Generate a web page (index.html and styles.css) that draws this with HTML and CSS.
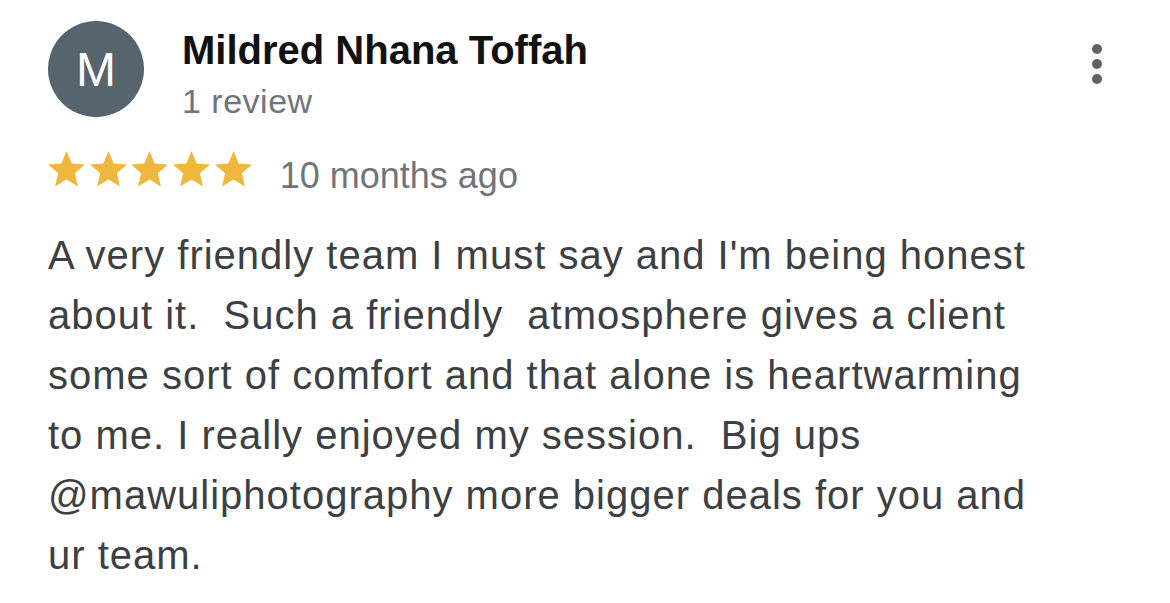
FILE: index.html
```html
<!DOCTYPE html>
<html lang="en">
<head>
    <meta charset="UTF-8">
    <meta name="viewport" content="width=device-width, initial-scale=1.0">
    <title>Review</title>
    <link rel="stylesheet" href="styles.css">
</head>
<body>
    <div class="review">
        <div class="review-header">
            <div class="avatar">M</div>
            <div class="author">
                <div class="author-name">Mildred Nhana Toffah</div>
                <div class="author-meta">1 review</div>
            </div>
            <button class="more" aria-label="More options">
                <span class="dot"></span>
                <span class="dot"></span>
                <span class="dot"></span>
            </button>
        </div>

        <div class="rating-row">
            <div class="stars">
                <svg class="star" viewBox="2 2 20 19.27" preserveAspectRatio="none"><path d="M12 17.27L18.18 21l-1.64-7.03L22 9.24l-7.19-.61L12 2 9.19 8.63 2 9.24l5.46 4.73L5.82 21z"/></svg>
                <svg class="star" viewBox="2 2 20 19.27" preserveAspectRatio="none"><path d="M12 17.27L18.18 21l-1.64-7.03L22 9.24l-7.19-.61L12 2 9.19 8.63 2 9.24l5.46 4.73L5.82 21z"/></svg>
                <svg class="star" viewBox="2 2 20 19.27" preserveAspectRatio="none"><path d="M12 17.27L18.18 21l-1.64-7.03L22 9.24l-7.19-.61L12 2 9.19 8.63 2 9.24l5.46 4.73L5.82 21z"/></svg>
                <svg class="star" viewBox="2 2 20 19.27" preserveAspectRatio="none"><path d="M12 17.27L18.18 21l-1.64-7.03L22 9.24l-7.19-.61L12 2 9.19 8.63 2 9.24l5.46 4.73L5.82 21z"/></svg>
                <svg class="star" viewBox="2 2 20 19.27" preserveAspectRatio="none"><path d="M12 17.27L18.18 21l-1.64-7.03L22 9.24l-7.19-.61L12 2 9.19 8.63 2 9.24l5.46 4.73L5.82 21z"/></svg>
            </div>
            <span class="review-date">10 months ago</span>
        </div>

        <p class="review-text">A very friendly team I must say and I'm being honest about it.  Such a friendly  atmosphere gives a client some sort of comfort and that alone is heartwarming to me. I really enjoyed my session.  Big ups @mawuliphotography more bigger deals for you and ur team.</p>
    </div>
</body>
</html>
```

FILE: styles.css
```css
body {
    background-color: #ffffff;
    font-family: "Liberation Sans", Arial, Helvetica, sans-serif;
    margin: 0;
    padding: 21px 68px 0 48px;
}
.review-header {
    display: flex;
    align-items: flex-start;
}
.avatar {
    width: 96px;
    height: 96px;
    border-radius: 50%;
    background-color: #56646e;
    color: #ffffff;
    font-size: 48px;
    line-height: 98px;
    text-align: center;
    flex-shrink: 0;
}
.author {
    margin-left: 38px;
}
.author-name {
    margin-top: 7px;
    font-size: 40px;
    line-height: 44px;
    font-weight: bold;
    color: #111111;
}
.author-meta {
    margin-top: 9px;
    font-size: 34px;
    line-height: 40px;
    letter-spacing: 0.5px;
    color: #70757a;
}
.more {
    margin-left: auto;
    margin-top: 23px;
    background: none;
    border: none;
    padding: 0;
    display: flex;
    flex-direction: column;
    gap: 5px;
    cursor: pointer;
}
.dot {
    width: 10px;
    height: 10px;
    border-radius: 50%;
    background-color: #5f6368;
}
.rating-row {
    display: flex;
    align-items: flex-start;
    margin-top: 30px;
}
.stars {
    display: flex;
    gap: 4.7px;
}
.star {
    width: 37px;
    height: 36px;
    fill: #f0b73f;
}
.review-date {
    margin-left: 28px;
    margin-top: 5px;
    font-size: 36px;
    line-height: 40px;
    color: #70757a;
}
.review-text {
    margin: 29px 0 0;
    width: 1000px;
    font-size: 40px;
    line-height: 60px;
    letter-spacing: 1px;
    color: #3c4043;
    white-space: pre-wrap;
}
```
